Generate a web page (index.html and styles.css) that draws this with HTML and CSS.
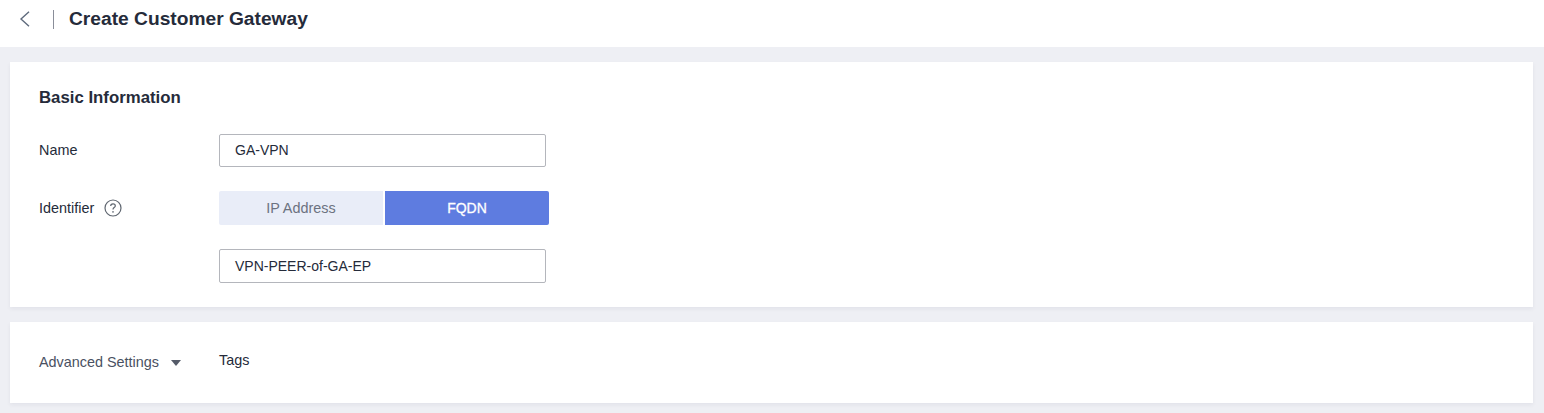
FILE: index.html
```html
<!DOCTYPE html>
<html lang="en">
<head>
<meta charset="utf-8">
<title>Create Customer Gateway</title>
<link rel="stylesheet" href="styles.css">
</head>
<body>
<header class="topbar">
  <button class="back" aria-label="Back">
    <svg width="12" height="16" viewBox="0 0 12 16"><path d="M10 .8 2 8l8 7.2" fill="none" stroke="#5e6a7c" stroke-width="1.4"/></svg>
  </button>
  <span class="divider"></span>
  <h1 class="page-title">Create Customer Gateway</h1>
</header>
<main class="content">
  <section class="card basic">
    <h2 class="section-title">Basic Information</h2>
    <div class="form-row name-row">
      <label class="form-label">Name</label>
      <div class="text-input">GA-VPN</div>
    </div>
    <div class="form-row id-row">
      <label class="form-label">Identifier
        <svg class="help" width="18" height="18" viewBox="0 0 18 18"><circle cx="9" cy="9" r="8" fill="none" stroke="#5f6670" stroke-width="1.2"/><path d="M6.7 7.1c0-1.4 1-2.2 2.3-2.2s2.3.8 2.3 2c0 1.7-2.3 1.7-2.3 3.5" fill="none" stroke="#5f6670" stroke-width="1.2"/><circle cx="9" cy="12.9" r=".8" fill="#5f6670"/></svg>
      </label>
      <div class="segmented">
        <div class="segment">IP Address</div>
        <div class="segment active">FQDN</div>
      </div>
    </div>
    <div class="form-row value-row">
      <span></span>
      <div class="text-input">VPN-PEER-of-GA-EP</div>
    </div>
  </section>
  <section class="card advanced">
    <div class="adv-toggle">Advanced Settings<span class="caret"></span></div>
    <div class="adv-tags">Tags</div>
  </section>
</main>
</body>
</html>
```
FILE: styles.css
```css
* { box-sizing: border-box; }
html, body { margin: 0; height: 100%; }
body {
  background: #eeeff4;
  font-family: "Liberation Sans", Arial, sans-serif;
  font-size: 14.4px;
  color: #252b3a;
  overflow: hidden;
}
.topbar {
  height: 47px;
  background: #fff;
  display: flex;
  align-items: center;
  padding: 0 0 9px 19px;
}
.back {
  border: 0;
  background: none;
  padding: 0;
  width: 12px;
  height: 16px;
  display: block;
}
.back svg { display: block; }
.divider {
  width: 1px;
  height: 19px;
  background: #8a8e99;
  margin: 0 15px 0 22px;
}
.page-title {
  margin: 0;
  font-size: 19.2px;
  line-height: 24px;
  font-weight: 700;
  color: #252b3a;
}
.content {
  padding: 15px 11px 0 10px;
  display: flex;
  flex-direction: column;
  gap: 15px;
}
.card {
  background: #fff;
  box-shadow: 0 2px 4px rgba(30, 40, 70, .06);
}
.basic {
  height: 245px;
  padding: 26px 29px 0;
}
.section-title {
  margin: 0;
  font-size: 16.8px;
  line-height: 20px;
  font-weight: 700;
}
.form-row {
  display: grid;
  grid-template-columns: 180px 1fr;
  align-items: center;
}
.name-row { margin-top: 26px; }
.name-row .form-label { padding-bottom: 2px; }
.id-row { margin-top: 24px; }
.value-row { margin-top: 24px; }
.form-label {
  display: flex;
  align-items: center;
  gap: 10px;
  color: #252b3a;
}
.text-input {
  width: 327px;
  height: 33px;
  border: 1px solid #b4b6bc;
  border-radius: 2px;
  padding: 0 15px;
  font-size: 14px;
  line-height: 30px;
  color: #252b3a;
}
.value-row .text-input { height: 34px; line-height: 32px; }
.segmented {
  display: grid;
  grid-template-columns: 164px 164px;
  gap: 2px;
  height: 34px;
}
.segment {
  background: #e9edf8;
  color: #6c7280;
  text-align: center;
  line-height: 34px;
  border-radius: 2px 0 0 2px;
}
.segment.active {
  background: #5e7ce0;
  color: #fff;
  font-size: 14px;
  -webkit-text-stroke: .3px #fff;
  border-radius: 0 2px 2px 0;
}
.advanced {
  height: 81px;
  padding: 0 29px;
  display: grid;
  grid-template-columns: 180px 1fr;
  align-items: center;
}
.adv-toggle { display: flex; align-items: center; color: #4a5162; padding-bottom: 1px; }
.caret {
  width: 0;
  height: 0;
  margin-left: 12px;
  margin-top: 2px;
  border-left: 5px solid transparent;
  border-right: 5px solid transparent;
  border-top: 6px solid #555b69;
}
.adv-tags { color: #252b3a; padding-bottom: 5px; }
```
